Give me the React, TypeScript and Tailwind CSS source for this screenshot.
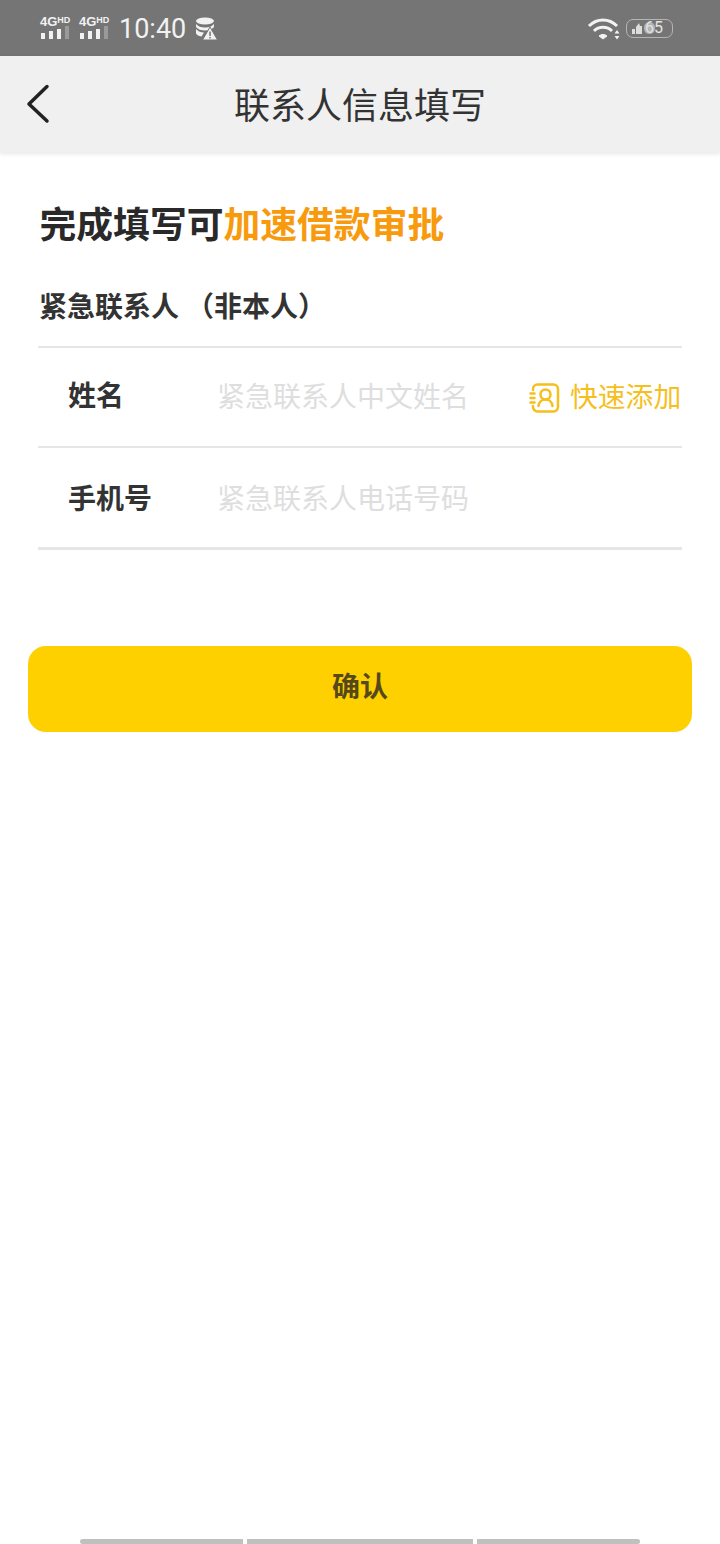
import React from "react";

const cjk = "font-['Roboto','Noto_Sans_CJK_SC',sans-serif]";

function Signal() {
  return (
    <div className="flex w-[30px] flex-col">
      <div className="flex h-[9px] items-start font-['Liberation_Sans',sans-serif] font-bold leading-none text-[#f2f2f2]">
        <span className="text-[13px] leading-[10px]">4G</span>
        <span className="text-[9px] leading-[7px]">HD</span>
      </div>
      <div className="flex h-[13px] items-end gap-[4px] pl-[1px]">
        <span className="h-[6px] w-[4px] bg-[#f2f2f2]" />
        <span className="h-[8px] w-[4px] bg-[#f2f2f2]" />
        <span className="h-[10px] w-[4px] bg-[#f2f2f2]" />
        <span className="h-[13px] w-[4px] bg-[#9a9a9a]" />
      </div>
    </div>
  );
}

function StatusBar() {
  return (
    <div className="flex h-14 items-center justify-between bg-[#757575] pl-10 pr-[47px] text-[#f2f2f2]">
      <div className="flex items-center">
        <Signal />
        <div className="ml-[9px]">
          <Signal />
        </div>
        <span className="ml-[10px] pt-[3px] font-['Roboto',sans-serif] text-[27px] leading-none">10:40</span>
        <svg className="ml-[9px] mt-[1px]" width="23" height="24" viewBox="0 0 23 24" fill="#f2f2f2">
          <ellipse cx="10" cy="4" rx="9" ry="3.500" />
          <path d="M1 7c2 2.500 5 3.500 9 3.500s7-1 9-3.500v3c-2 2.500-5 3.500-9 3.500s-7-1-9-3.500z" />
          <path d="M1 12c2 2.500 5 3.500 8 3.500l-2.500 4c-3-.5-4.500-1.500-5.500-3z" />
          <path d="M15 10l7.500 13h-15z" stroke="#757575" strokeWidth="1" />
          <rect x="14.300" y="14.500" width="1.500" height="4.500" fill="#757575" />
          <rect x="14.300" y="20" width="1.500" height="1.500" fill="#757575" />
        </svg>
      </div>
      <div className="flex items-center">
        <svg width="34" height="24" viewBox="0 0 34 24" fill="none" stroke="#f2f2f2" strokeWidth="3">
          <path d="M2 10c8-8 20-8 28 0" />
          <path d="M7 15c5-5 13-5 18 0" />
          <path d="M12 20l4 3 4-3c-2-2-6-2-8 0z" fill="#f2f2f2" strokeWidth="1" />
          <path d="M30 14l2.500 3.500h-5zM30 23.500l2.500-3.500h-5z" fill="#f2f2f2" stroke="none" />
        </svg>
        <div className="ml-[5px] flex h-[19px] w-[47px] items-center rounded-[7px] border border-[#b5b5b5] pl-[4px]">
          <svg width="12" height="13" viewBox="0 0 12 13" fill="#dcdcdc">
            <path d="M1 7h3v5H1zM5 5l3-4 1 3h2v8H5z" />
          </svg>
          <span className="relative ml-[2px] font-['Roboto',sans-serif] text-[16px] leading-none text-[#e4e4e4]">
            <span className="absolute -left-[1px] top-[2px] h-[12px] w-[11px] rounded-full bg-[#dcdcdc]/60" />
            65
          </span>
        </div>
      </div>
    </div>
  );
}

function Header() {
  return (
    <div className="relative flex h-[97px] items-center justify-center bg-[#f0f0f0] shadow-[0_1px_4px_rgba(0,0,0,0.1)]">
      <svg className="absolute left-[26px] top-[28px]" width="24" height="40" viewBox="0 0 24 40" fill="none" stroke="#222222" strokeWidth="3.500" strokeLinecap="round" strokeLinejoin="round">
        <path d="M21 2.500 3 20l18 17" />
      </svg>
      <span className="pt-[4px] text-[36px] leading-none text-[#333333]">联系人信息填写</span>
    </div>
  );
}

function QuickAdd() {
  return (
    <div className="flex shrink-0 items-center pt-[2px] text-[#f5bf1d]">
      <svg width="32" height="32" viewBox="0 0 32 32" fill="none" stroke="#f5bf1d" strokeWidth="2.500" strokeLinecap="round">
        <path d="M4 8V7a4.500 4.500 0 0 1 4.500-4.500h16A4.500 4.500 0 0 1 29 7v18a4.500 4.500 0 0 1-4.500 4.500h-16A4.500 4.500 0 0 1 4 25v-1" />
        <circle cx="16.500" cy="12.500" r="5" />
        <path d="M9.500 24c.5-4 3.500-6.500 7-6.500s6.500 2.500 7 6.500" />
        <path d="M1.500 11.500h4M1.500 16h4M1.500 20.500h4" />
      </svg>
      <span className="ml-[9px] whitespace-nowrap text-[27.800px] leading-none">快速添加</span>
    </div>
  );
}

export default function App() {
  return (
    <div className={`relative flex h-[1544px] w-[720px] flex-col bg-white ${cjk}`}>
      <StatusBar />
      <Header />
      <div className="px-[38px]">
        <h1 className="ml-[1.500px] mt-[53px] text-[36.800px] font-bold leading-[40px] text-[#292929]">
          完成填写可<span className="text-[#f79a0e]">加速借款审批</span>
        </h1>
        <p className="ml-[1px] mt-[44px] text-[28px] font-bold leading-[36px] text-[#333333]">紧急联系人 （非本人）</p>
        <div className="mt-[20px] flex h-[102px] items-center border-y-2 border-[#e6e6e6] pl-[30px]">
          <span className="w-[149px] text-[28px] font-bold leading-none text-[#333333]">姓名</span>
          <span className="w-[312px] pt-[2px] text-[28px] leading-none text-[#dedede]">紧急联系人中文姓名</span>
          <QuickAdd />
        </div>
        <div className="flex h-[102px] items-center border-b-[3px] border-[#e6e6e6] pl-[30px] pt-[5px]">
          <span className="w-[149px] text-[28px] font-bold leading-none text-[#333333]">手机号</span>
          <span className="text-[28px] leading-none text-[#dedede]">紧急联系人电话号码</span>
        </div>
      </div>
      <div className="mx-[28px] mt-[96px] flex h-[86px] items-center justify-center rounded-[18px] bg-[#ffd000] pb-[2px]">
        <span className="text-[28px] font-bold leading-none text-[#55481a]">确认</span>
      </div>
      <div className="mt-auto flex h-[5px] justify-center gap-[4px]">
        <span className="w-[163px] rounded-l-full bg-[#c0c0c0]" />
        <span className="w-[226px] bg-[#c0c0c0]" />
        <span className="w-[163px] rounded-r-full bg-[#c0c0c0]" />
      </div>
    </div>
  );
}
